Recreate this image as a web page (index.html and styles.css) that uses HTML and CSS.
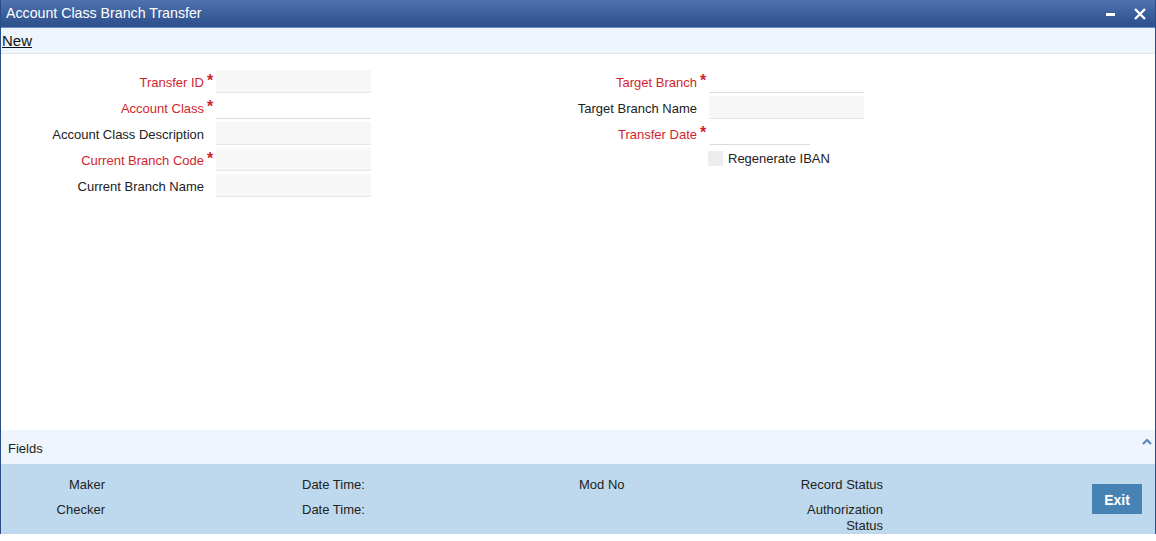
FILE: index.html
```html
<!DOCTYPE html>
<html>
  <head>
    <title>Account Class Branch Transfer</title>
    <link rel="stylesheet" href="styles.css">
  </head>
  <body>
    <div class="window">
      <!-- title bar -->
      <div class="titlebar">
        <span class="title">Account Class Branch Transfer</span>
        <span class="win-btns">
          <svg width="12" height="12" viewBox="0 0 12 12"><rect x="1" y="5" width="9" height="3" fill="#fff"/></svg>
          <svg width="14" height="14" viewBox="0 0 14 14"><path d="M2 2 L12 12 M12 2 L2 12" stroke="#fff" stroke-width="2.4"/></svg>
        </span>
      </div>

      <div class="toolbar"><a href="#" class="tool-link">New</a></div>

      <!-- main form -->
      <div class="form">
        <label class="lbl req">Transfer ID</label><span class="star">*</span><input class="fld ro">
        <label class="lbl req">Target Branch</label><span class="star">*</span><input class="fld">

        <label class="lbl req">Account Class</label><span class="star">*</span><input class="fld">
        <label class="lbl">Target Branch Name</label><span class="star"></span><input class="fld ro">

        <label class="lbl">Account Class Description</label><span class="star"></span><input class="fld ro">
        <label class="lbl req">Transfer Date</label><span class="star">*</span><input class="fld short">

        <label class="lbl req">Current Branch Code</label><span class="star">*</span><input class="fld ro">
        <span></span><span></span>
        <span class="check"><span class="box"></span>Regenerate IBAN</span>

        <label class="lbl">Current Branch Name</label><span class="star"></span><input class="fld ro">
      </div>

      <div class="fields-bar">
        <span>Fields</span>
        <svg class="caret" width="10" height="7" viewBox="0 0 10 7"><path d="M1 6 L5 2 L9 6" stroke="#5b86c2" stroke-width="2.2" fill="none"/></svg>
      </div>

      <!-- audit footer -->
      <div class="audit">
        <div class="audit-grid">
          <span class="a-right">Maker</span><span></span><span>Date Time:</span><span>Mod No</span><span class="a-right">Record Status</span>
          <span class="a-right">Checker</span><span></span><span>Date Time:</span><span></span><span class="a-right">Authorization<br>Status</span>
        </div>
        <button class="exit">Exit</button>
      </div>
    </div>
  </body>
</html>
```

FILE: styles.css
```css
/* Account class branch transfer screen */
body {
  margin: 0;
  background: #fff;
  font-family: Arial, "Liberation Sans", sans-serif;
  font-size: 13px;
  color: #222;
}

.window {
  width: 1154px;
  height: 534px;
  border-left: 1px solid #2b4d87;
  border-right: 1px solid #2b4d87;
  display: flex;
  flex-direction: column;
}

.titlebar {
  height: 27px;
  background: linear-gradient(#4e73ad, #2b4e8c);
  border-bottom: 1px solid #6b8cbf;
  display: flex;
  align-items: center;
  justify-content: space-between;
  color: #fff;
}

.title {
  font-size: 14.2px;
  padding-left: 5px;
  padding-bottom: 2px;
}

.win-btns {
  display: flex;
  gap: 16px;
  padding-right: 8px;
  align-items: center;
}

.toolbar {
  height: 25px;
  background: #eef5fd;
  border-bottom: 1px solid #dfe4ea;
  display: flex;
  align-items: center;
}

.tool-link {
  color: #111;
  font-size: 15px;
  padding-left: 1px;
}

.form {
  display: grid;
  grid-template-columns: 203px 12px 155px 326px 12px 155px;
  grid-auto-rows: 23px;
  row-gap: 3px;
  padding-top: 16px;
  align-items: center;
  flex: 1;
  align-content: start;
}

.lbl {
  text-align: right;
  padding-top: 2px;
}

.req {
  color: #d11f2e;
}

.star {
  color: #d11f2e;
  font-size: 16px;
  font-weight: bold;
  text-align: center;
  align-self: start;
  padding-top: 2px;
}

.fld {
  height: 23px;
  box-sizing: border-box;
  border: none;
  border-bottom: 1px solid #dcdcdc;
  background: #fff;
  padding: 0;
  margin: 0;
}

.fld.ro {
  background: #f7f7f7;
  border-bottom-color: #e6e6e6;
}

.fld.short {
  width: 101px;
}

.check {
  display: flex;
  align-items: center;
  gap: 5px;
  margin-left: -1px;
  margin-top: -2px;
}

.box {
  width: 15px;
  height: 15px;
  background: #ececec;
}

.fields-bar {
  height: 34px;
  background: #eef5fd;
  display: flex;
  justify-content: space-between;
  align-items: center;
  padding: 0 3px 0 7px;
}

.fields-bar span {
  padding-top: 3px;
}

.caret {
  align-self: flex-start;
  margin-top: 8px;
}

.audit {
  height: 70px;
  background: #bed9ed;
  display: flex;
  justify-content: space-between;
}

.audit-grid {
  display: grid;
  grid-template-columns: 104px 197px 277px 120px 184px;
  grid-template-rows: 25px 16px;
  line-height: 16px;
  padding-top: 13px;
}

.a-right {
  text-align: right;
}

.exit {
  width: 50px;
  height: 30px;
  margin: 20px 13px 0 0;
  padding-top: 2px;
  background: #4682b4;
  border: none;
  color: #fff;
  font-family: Arial, "Liberation Sans", sans-serif;
  font-size: 14px;
  font-weight: bold;
}
```
